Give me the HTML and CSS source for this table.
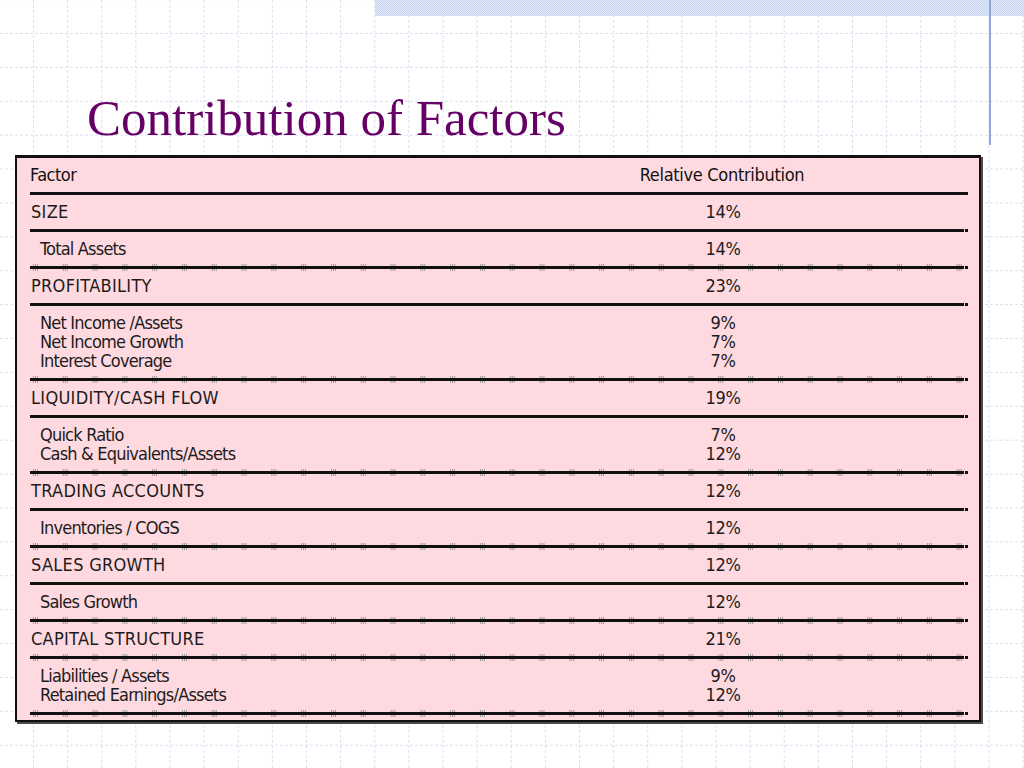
FILE: index.html
```html
<!DOCTYPE html>
<html lang="en">
<head>
<meta charset="utf-8">
<title>Contribution of Factors</title>
<link rel="stylesheet" href="styles.css">
</head>
<body>
<div class="page">
  <div class="topbar"></div>
  <div class="vline"></div>
  <h1 class="title">Contribution of Factors</h1>
  <div class="table">
    <div class="row head"><div>Factor</div><div class="val">Relative Contribution</div></div>
    <div class="rule"></div>

    <div class="row cat"><div>SIZE</div><div class="val">14%</div></div>
    <div class="rule dot"></div>
    <div class="row sub"><div>Total Assets</div><div class="val">14%</div></div>
    <div class="rule dot ticks"></div>

    <div class="row cat"><div>PROFITABILITY</div><div class="val">23%</div></div>
    <div class="rule dot"></div>
    <div class="row sub"><div>Net Income /Assets<br>Net Income Growth<br>Interest Coverage</div><div class="val">9%<br>7%<br>7%</div></div>
    <div class="rule dot ticks"></div>

    <div class="row cat"><div>LIQUIDITY/CASH FLOW</div><div class="val">19%</div></div>
    <div class="rule dot"></div>
    <div class="row sub"><div>Quick Ratio<br>Cash &amp; Equivalents/Assets</div><div class="val">7%<br>12%</div></div>
    <div class="rule dot ticks"></div>

    <div class="row cat"><div>TRADING ACCOUNTS</div><div class="val">12%</div></div>
    <div class="rule dot"></div>
    <div class="row sub"><div>Inventories / COGS</div><div class="val">12%</div></div>
    <div class="rule dot ticks"></div>

    <div class="row cat"><div>SALES GROWTH</div><div class="val">12%</div></div>
    <div class="rule dot"></div>
    <div class="row sub"><div>Sales Growth</div><div class="val">12%</div></div>
    <div class="rule dot ticks"></div>

    <div class="row cat"><div>CAPITAL STRUCTURE</div><div class="val">21%</div></div>
    <div class="rule dot ticks"></div>
    <div class="row sub"><div>Liabilities / Assets<br>Retained Earnings/Assets</div><div class="val">9%<br>12%</div></div>
    <div class="rule dot ticks"></div>
  </div>
</div>
</body>
</html>
```

FILE: styles.css
```css
html, body {
  margin: 0;
  padding: 0;
  background: #ffffff;
}

.page {
  position: relative;
  width: 1024px;
  height: 768px;
  overflow: hidden;
  background-color: #ffffff;
  background-image:
    conic-gradient(at 1px 3px, transparent 0 270deg, #dedef2 270deg),
    conic-gradient(at 3px 1px, transparent 0 270deg, #dedef2 270deg);
  background-size: 34.133px 5px, 5px 33.9px;
  background-position: 33px 0, 0 33px;
}

.topbar {
  margin-left: 375px;
  height: 16px;
  background-color: #d3ddf5;
  background-image: repeating-conic-gradient(#c8d4f2 0 25%, #e2e9f9 0 50%);
  background-size: 2px 2px;
}

.vline {
  position: absolute;
  left: 989px;
  top: 0;
  width: 2px;
  height: 145px;
  background: #93a6de;
}

.title {
  margin: 77px 0 0 0;
  padding-left: 87px;
  height: 51px;
  font-family: "Liberation Serif", "Times New Roman", serif;
  font-weight: normal;
  font-size: 51px;
  line-height: 51px;
  color: #660066;
}

.table {
  margin: 11px 0 0 15px;
  width: 938px;
  background: #ffd9e0;
  border: 2px solid #111111;
  border-top-width: 3px;
  box-shadow: 2px 2px 0 #4a4a4a;
  padding: 0 11px 5px 13px;
  font-family: "DejaVu Sans Condensed", "DejaVu Sans", sans-serif;
  font-size: 18px;
  letter-spacing: -0.5px;
  color: #1c1c1c;
}

.row {
  display: grid;
  grid-template-columns: 592px 200px;
  padding: 7px 0 8px 1px;
  line-height: 19px;
}

.row.head {
  padding-left: 0;
  color: #111111;
}

.row.cat {
  letter-spacing: 0.3px;
}

.row.sub {
  padding-left: 10px;
  grid-template-columns: 583px 200px;
  letter-spacing: -0.8px;
}

.row .val {
  text-align: center;
  letter-spacing: -0.3px;
}

.rule {
  display: flex;
  height: 3px;
  gap: 1px;
}

.rule::before {
  content: "";
  flex: 1;
  background: #111111;
}

.rule.dot::after {
  content: "";
  width: 3px;
  height: 3px;
  align-self: center;
  background: #111111;
}

.rule.ticks {
  height: 7px;
  margin: -2px 0;
}

.rule.ticks::before {
  background:
    linear-gradient(#111111, #111111) 0 2px / 100% 3px no-repeat,
    linear-gradient(90deg, transparent 3px, #9a9a9a 3px 4px, transparent 4px 5px, #9a9a9a 5px 6px, transparent 6px 7px, #9a9a9a 7px 8px, transparent 8px) 0 0 / 29.8px 100% repeat-x;
}
```
